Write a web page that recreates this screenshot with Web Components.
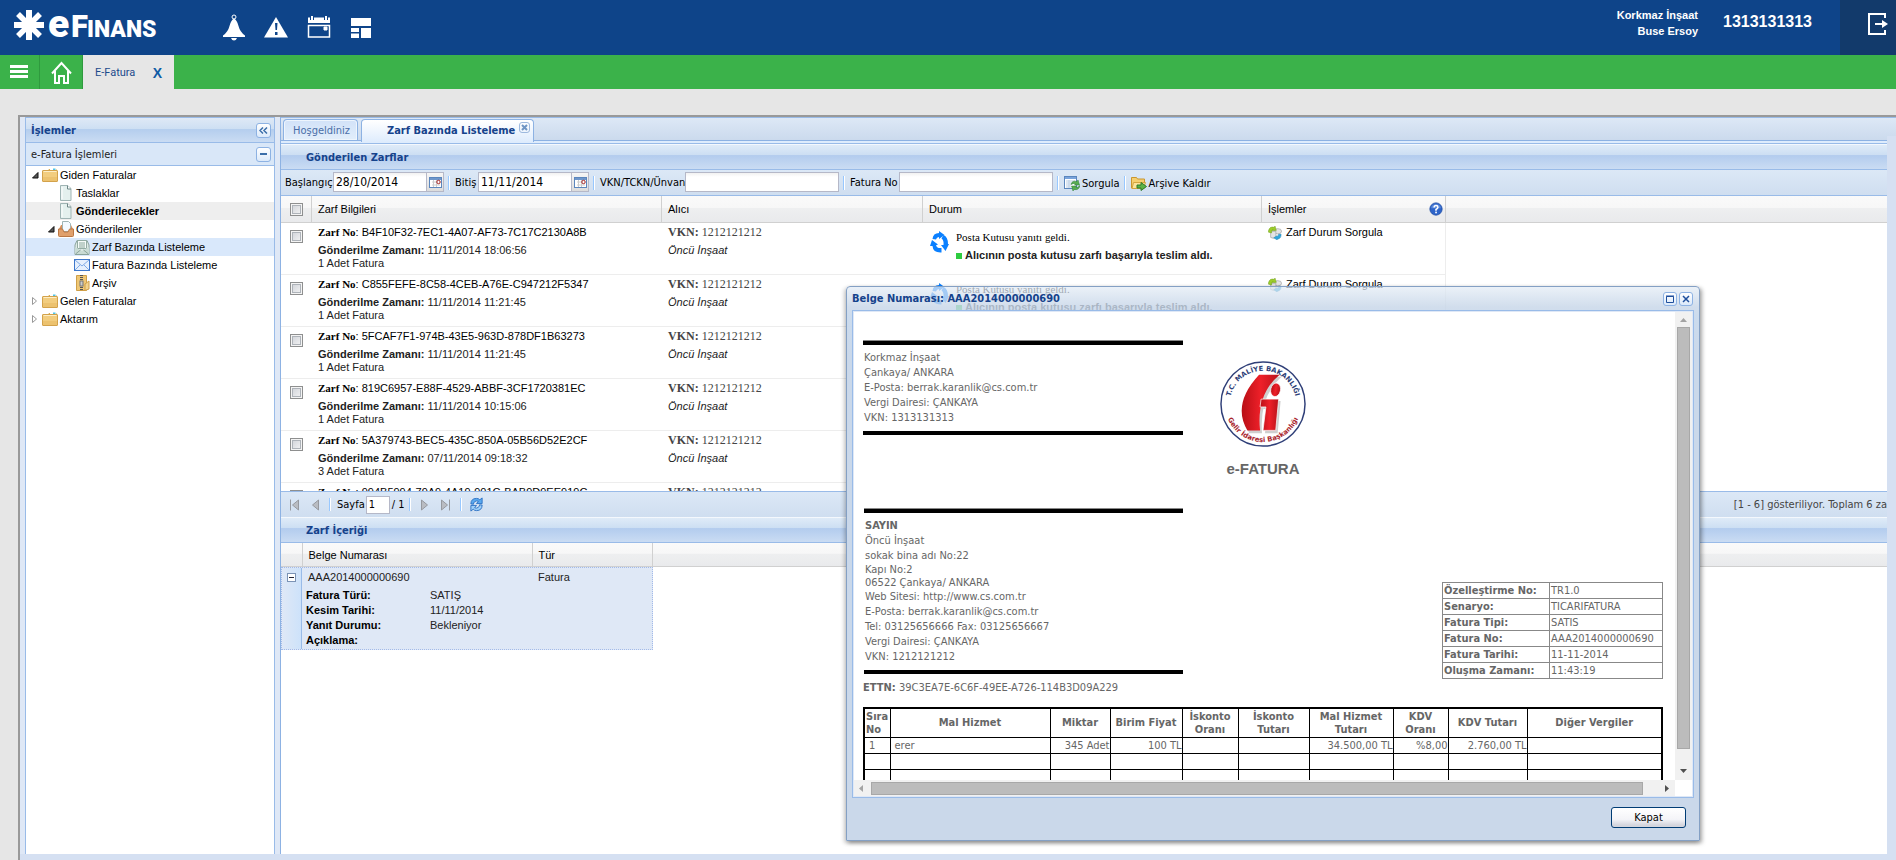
<!DOCTYPE html>
<html lang="tr">
<head>
<meta charset="utf-8">
<title>e-Finans</title>
<style>
html, body { margin: 0; height: 100%; }
body { background: #e6e6e6; overflow: hidden; font: 11px/13px "DejaVu Sans Condensed", "DejaVu Sans", Tahoma, sans-serif; color: #000; }
</style>
</head>
<body>
<efinans-app></efinans-app>
<script>
const base = `
*{box-sizing:border-box}
:host{--line:#99bbe8;--title:#15428b;--ui:"DejaVu Sans Condensed","DejaVu Sans",Tahoma,sans-serif;--txt:"Liberation Sans",Arial,sans-serif;--times:"Liberation Serif","Times New Roman",serif;display:block}
button{margin:0;padding:0;border:0;background:none;font:inherit;color:inherit}
a{color:inherit;text-decoration:none}
input{margin:0;outline:none;border-radius:0}
svg{display:block}
table{border-collapse:collapse;table-layout:fixed}
td,th{padding:0;text-align:left;font-weight:400}
input[type=checkbox]{appearance:none;display:block;width:13px;height:13px;border:1px solid #8e8f8f;background:linear-gradient(135deg,#cdd0d6,#f6f6f6);box-shadow:inset 0 0 0 1px #f4f4f4,inset 0 0 0 2px #aeb3b9}
`;
const define = (name, css, html) => {
  const t = document.createElement('template');
  t.innerHTML = `<style>${base}${css}</style>${typeof html === 'string' ? html : ''}`;
  customElements.define(name, class extends HTMLElement {
    constructor() {
      super();
      const root = this.attachShadow({ mode: 'open' });
      root.append(t.content.cloneNode(true));
    }
    connectedCallback() {
      if (typeof html === 'function' && !this.done) {
        this.done = true;
        this.shadowRoot.innerHTML = `<style>${base}${css}</style>` + html(this);
      }
    }
  });
};

/* ---------- icons ---------- */
const ICONS = {
  folder: `<path d="M1 3.5h5l1-1.500h7.500v3H1z" fill="#dcae55"/><rect x="8" y="1.500" width="6" height="3" fill="#fff"/><rect x="11" y="1.500" width="2.500" height="1.500" fill="#4fc3e8"/><rect x=".5" y="3.500" width="15" height="11" rx=".5" fill="#f2cd7f" stroke="#d3a24b"/><path d="M1.500 4.500h13" stroke="#fdeec6"/><path d="M1 10h14v4H1z" fill="#e6b85f" opacity=".5"/>`,
  page: `<path d="M2.500 .5h7l3.500 3v12h-10.500z" fill="#e4f0ee" stroke="#9fb4b4"/><path d="M9.500 .5v3.500h3.500" fill="#fff" stroke="#6d8787"/><path d="M4 2v12" stroke="#fff"/>`,
  inbox: `<path d="M1 8l2-4h10l2 4v6.500H1z" fill="#d68f5a"/><path d="M4.500 .5h6l2 2v8h-8z" fill="#f4faff" stroke="#9fb4b4"/><path d="M.5 8h4l1.500 3h4l1.500-3h4v6.500q0 1-1 1h-13q-1 0-1-1z" fill="#e0a06c" stroke="#bb7744"/>`,
  mailopen: `<path d="M1 6l2-4.500h10L15 6v9.500H1z" fill="#dfeae6" stroke="#8aa39b"/><path d="M3.500 1.500h9v8h-9z" fill="#f6fbf8" stroke="#93aca3"/><path d="M5 4h6M5 6h6M5 8h6" stroke="#8aa79c"/><path d="M1 8l7 4 7-4v7H1z" fill="#c9dbd4"/><path d="M1.500 15l5-4M14.500 15l-5-4" stroke="#8aa39b"/>`,
  mail: `<rect x=".5" y="2.500" width="15" height="11" fill="#e6f0fd" stroke="#3e78cc"/><path d="M1 3l7 6 7-6M1 13l5-5M15 13l-5-5" fill="none" stroke="#7faae6"/>`,
  zip: `<path d="M2.500 .5h10v15h-10z" fill="#efc775" stroke="#cf9f48"/><path d="M11 9l4-3v8l-4 1.500z" fill="#f3d48f" stroke="#cf9f48"/><path d="M7.500 0v16" stroke="#555" stroke-width="3" stroke-dasharray="1 1"/><rect x="6" y="6" width="3" height="5" fill="#ccc" stroke="#777"/>`,
  calendar: `<rect x=".5" y="1.500" width="12" height="10" fill="#fff" stroke="#5b86bd"/><path d="M1 3h11" stroke="#6f97cb" stroke-width="2"/><path d="M3 6h8M3 9h8M4.500 4v7M7.500 4v7" stroke="#ccc"/><circle cx="9.500" cy="6" r="1.700" fill="#fff" stroke="#a02020"/>`,
  sheet: `<rect x=".5" y="1.500" width="12" height="12" fill="#fff" stroke="#5b86bd"/><rect x="1" y="2" width="11" height="2" fill="#7aa4dc"/><path d="M2 6h9M2 8h9M2 10h5M2 12h5M5 5v8" stroke="#b9cde4"/><path d="M7 9.500Q8 5 13 6.500L14 5l1.500 5h-5l1.200-1.500Q9.500 8 7 9.500zM16 10.500q-1 5-6 4L9 16l-1.500-5h5l-1.200 1.500q2.500.5 4.700-2z" fill="#58ae50" stroke="#2d7a35" stroke-width=".5"/>`,
  archive: `<path d="M.5 2.500h5l1 1.500h7v9H.5z" fill="#f5cf70" stroke="#c9962f"/><path d="M2.500 7.500h12l-2 6H1z" fill="#fbe39d" stroke="#d3a53f"/><path d="M6 10h4V7.500l5.500 4-5.500 4V13H6z" fill="#5cb346" stroke="#2f7a2a"/>`,
  status: `<ellipse cx="11" cy="6" rx="4.500" ry="3" fill="#e4e4e4" stroke="#999" stroke-width=".7"/><path d="M3 6v7q3 2 6 0V6z" fill="#e4e4e4" stroke="#999" stroke-width=".7"/><path d="M.5 5.500Q2 0 7 1.500L8 0l1.500 5H4.500L5.500 4Q4 5 4 8L.5 7z" fill="#9ccc2a" stroke="#6a9a18" stroke-width=".5"/><path d="M15 9.500q0 5.500-4.500 5.500v1l-4-2.500 4-2.500v1q1.500 0 1.500-2.500z" fill="#2fa6dc" stroke="#1c7fb0" stroke-width=".5"/>`,
  refresh: `<path d="M2 7.500Q2 1.500 8 1.500q2.500 0 3.500 1.500L14 1v6H8l2-2.500Q8 3.500 6 5 5 6 4.500 8q-1-1-2.500-.5z" fill="#5aa9ee" stroke="#2e72c4"/><path d="M14 8.500q0 6-6 6-2.500 0-3.500-1.500L2 15V9h6l-2 2.500q2 1 4-.5 1-1 1.500-3 1 1 2.500.5z" fill="#9fd0f8" stroke="#2e72c4"/>`,
  cycle: `<path d="M2.500 8Q3 2 9 2V0l5.500 4L9 8V6Q6.500 6 6 8.500z"/><path d="M13.500 4Q18 6 18 13h1l-3.500 7-4.500-6h2.500q.5-5-2-6.500z"/><path d="M11.500 17v4.500Q3 22 2.500 15L0 15l2-6 6 4.500-2 .7Q7 17.500 11.500 17z"/>`,
  help: `<circle cx="8" cy="8" r="7" fill="#2d64c9" stroke="#1f4fa8"/><path d="M2.500 7a5.500 4.500 0 0 1 11 0z" fill="#79a3ea" opacity=".6"/><path d="M5.800 6.300Q6 4 8 4t2.200 2Q10.200 7.300 8 8.600V10" fill="none" stroke="#fff" stroke-width="1.800"/><rect x="7.100" y="11" width="1.900" height="1.900" fill="#fff"/>`
};
define('x-icon', `:host{flex:none;display:block}`, el => {
  const n = el.getAttribute('name'), w = el.getAttribute('w') || 16, h = el.getAttribute('h') || w;
  const vb = n === 'cycle' ? '0 0 19 22' : n === 'calendar' ? '0 0 13 13' : '0 0 16 16';
  return `<svg width="${w}" height="${h}" viewBox="${vb}" fill="#0b80ff" aria-hidden="true">${ICONS[n]}</svg>`;
});

/* ---------- top bar ---------- */
define('top-bar', `
:host{display:flex;height:55px;background:#0e4489;color:#fff;font-family:var(--txt)}
.logo{margin:0 0 0 12px;flex:none}
nav{display:flex;align-items:flex-start;gap:19px;margin:14px 0 0 61px;flex:1}
.who{font-weight:700;line-height:16px;text-align:right;margin:7px 0 0}
.id{font-weight:700;font-size:16px;line-height:18px;margin:13px 28px 0 25px}
.exit{width:56px;background:#123a6b;display:flex;align-items:flex-start;padding:13px 0 0 28px}
`, `
<svg class="logo" width="150" height="55" viewBox="12 0 150 55" fill="#fff" role="img" aria-label="eFinans">
 <g stroke="#fff" stroke-width="6"><path d="M29 10v30M14 25h30"/><path d="M18 14l22 22M40 14L18 36" stroke-width="5.500"/></g>
 <g font-family="Roboto,sans-serif" font-weight="900"><text x="48" y="37" font-size="39">e</text><text x="71" y="37" font-size="31">F</text><text x="87" y="37" font-size="23">INANS</text></g>
</svg>
<nav>
 <button aria-label="Bildirimler"><svg width="22" height="27" viewBox="0 0 22 27" fill="#fff"><circle cx="11" cy="3" r="2" fill="none" stroke="#fff"/><path d="M11 4.500Q14 6 15.500 12T22 21.500V23H0v-1.500Q5 18 6.500 12T11 4.500z"/><path d="M8 24h6q-1 2.500-3 2.500T8 24z"/></svg></button>
 <button aria-label="Uyarılar"><svg width="24" height="27" viewBox="0 0 24 27"><path d="M12 3L24 23.500H0z" fill="#fff"/><path d="M11 9h2.500l-.5 7h-1.500zM11 18h2.500v3H11z" fill="#0e4489"/></svg></button>
 <button aria-label="Takvim"><svg width="24" height="27" viewBox="0 0 24 27" fill="none" stroke="#fff"><path d="M1.500 11.500h21V23h-21z" stroke-width="1.500"/><path d="M1 3.500h22v5.500H1z" fill="#fff" stroke="none"/><path d="M5 2v4M19 2v4" stroke="#0e4489" stroke-width="4"/><path d="M5 2v4.500M19 2v4.500" stroke-width="2"/><path d="M17 13h3v3h-3z" fill="#fff"/></svg></button>
 <button aria-label="Düzen"><svg width="24" height="27" viewBox="0 0 24 27" fill="#fff"><path d="M1 4h20v8H1zM1 14h8v4H1zM1 19.500h8V24H1zM11 14h10v10H11z"/></svg></button>
</nav>
<div class="who">Korkmaz İnşaat<br>Buse Ersoy</div>
<div class="id">1313131313</div>
<button class="exit" aria-label="Çıkış"><svg width="20" height="22" viewBox="0 0 20 22" fill="none" stroke="#fff" stroke-width="2"><path d="M17 5V1H1v20h16v-4M7 11h10"/><path d="M14 7l6 4-6 4z" fill="#fff" stroke="none"/></svg></button>
`);

define('green-nav', `
:host{display:flex;height:34px;background:#3bb24a}
.menu,.home{border-right:1px solid #2f9a3e;display:flex;align-items:center}
.menu{width:40px;padding-left:10px}.home{width:43px;padding-left:11px}
.tab{width:91px;background:#e6e6e6;color:#1c4a8c;display:flex;align-items:flex-start;padding:10px 12px 0;justify-content:space-between;font-family:Roboto,sans-serif;line-height:15px}
.tab button{font:700 14px/17px var(--txt);color:#0e5ba5}
`, `
<button class="menu" aria-label="Menü"><svg width="18" height="14" viewBox="0 0 18 14" fill="#fff"><path d="M0 0h18v3H0zM0 5h18v3H0zM0 10h18v3H0z"/></svg></button>
<button class="home" aria-label="Ana sayfa"><svg width="21" height="23" viewBox="0 0 21 23" fill="none" stroke="#fff" stroke-width="2"><path d="M1 12.500L10.500 2 20 12.500M4 10v12h4v-7h5v7h4V10"/></svg></button>
<div class="tab"><a href="#efatura">E-Fatura</a><button aria-label="Kapat">X</button></div>
`);

/* ---------- sidebar ---------- */
define('tree-node', `
:host{display:flex;align-items:center;height:18px;font:11px/18px var(--txt);padding-left:calc(4px + var(--depth,0)*16px)}
:host([hot]){background:#eee}:host([selected]){background:#d9e8fb}:host([hot]) a{font-weight:700}
.arrow{width:12px;flex:none;display:flex;padding-left:1px}
a{margin-left:2px}
`, el => {
  const s = el.getAttribute('state');
  el.style.setProperty('--depth', el.getAttribute('depth') || 0);
  const arrow = s === 'open' ? `<svg width="8" height="8" viewBox="0 0 8 8"><path d="M7 1.500v5.500H1.500z" fill="#555" stroke="#111"/></svg>`
    : s === 'closed' ? `<svg width="8" height="8" viewBox="0 0 8 8"><path d="M1.500 .5l4 3.500-4 3.500z" fill="#fff" stroke="#999"/></svg>` : '';
  return `<span class="arrow">${arrow}</span><x-icon name="${el.getAttribute('icon')}"></x-icon><a href="#"><slot></slot></a>`;
});

define('side-bar', `
:host{width:250px;flex:none;display:flex;flex-direction:column;border:1px solid var(--line);border-bottom:0;background:#fff}
header,h3{display:flex;justify-content:space-between;align-items:center;margin:0;padding:0 3px 0 5px;border-bottom:1px solid var(--line)}
header{height:25px;background:linear-gradient(#dfe9f6,#cddff3 46%,#b5ceee 48%,#cadcf3);color:var(--title);font-weight:700}
h3{height:23px;background:#d9e7f8;font:11px/13px var(--ui);color:#222}
header button,h3 button{width:15px;height:15px;border:1px solid #8db2e3;border-radius:3px;background:linear-gradient(#fff,#dbe9fa);display:grid;place-items:center}
`, `
<header><span>İşlemler</span><button aria-label="Daralt"><svg width="9" height="7" viewBox="0 0 9 7" fill="none" stroke="#3b6ea9" stroke-width="1.500"><path d="M4 .5l-3 3 3 3M8 .5l-3 3 3 3"/></svg></button></header>
<h3><span>e-Fatura İşlemleri</span><button aria-label="Kapat"><svg width="7" height="2"><path d="M0 1h7" stroke="#3b6ea9" stroke-width="2"/></svg></button></h3>
<div>
<tree-node state="open" icon="folder">Giden Faturalar</tree-node>
<tree-node depth="1" icon="page">Taslaklar</tree-node>
<tree-node depth="1" icon="page" hot>Gönderilecekler</tree-node>
<tree-node depth="1" state="open" icon="inbox">Gönderilenler</tree-node>
<tree-node depth="2" icon="mailopen" selected>Zarf Bazında Listeleme</tree-node>
<tree-node depth="2" icon="mail">Fatura Bazında Listeleme</tree-node>
<tree-node depth="2" icon="zip">Arşiv</tree-node>
<tree-node state="closed" icon="folder">Gelen Faturalar</tree-node>
<tree-node state="closed" icon="folder">Aktarım</tree-node>
</div>`);

/* ---------- main area ---------- */
define('tab-strip', `
:host{height:27px;border-top:1px solid var(--line);border-bottom:1px solid var(--line);background:#deecfd;margin-right:-9px;flex:none}
nav{display:flex;height:23px;border-bottom:1px solid #8db2e3;background:linear-gradient(#dde8f6,#cbdaed);padding:1px 0 0 2px;gap:3px}
.tab{border:1px solid #8db2e3;border-bottom:0;border-radius:4px 4px 0 0;height:21px;font-size:11px;line-height:21px}
.one{width:75px;padding-left:9px;color:#4a6ea8;background:linear-gradient(#d2e2f8,#e2eefb);box-shadow:inset 0 0 0 1px #eef5fd}
.two{width:173px;height:23px;background:linear-gradient(#fff,#deecfd);color:var(--title);font-weight:700;display:flex;padding:0 3px 0 25px;justify-content:space-between}
.two button{width:11px;height:11px;margin-top:2px;border:1px solid #9db9de;border-radius:3px;display:grid;place-items:center}
`, `<nav><a class="tab one" href="#">Hoşgeldiniz</a><div class="tab two"><a href="#">Zarf Bazında Listeleme</a><button aria-label="Sekmeyi kapat"><svg width="7" height="7" viewBox="0 0 7 7" stroke="#6f95c4" stroke-width="2"><path d="M1 1l5 5M6 1L1 6"/></svg></button></div></nav>`);

define('panel-title', `
:host{height:26px;flex:none;border-bottom:1px solid var(--line);border-top:1px solid #f4f8fd;background:linear-gradient(#dfebf8,#cddff3 40%,#b3ccee 44%,#cadcf3);color:var(--title);font:700 11px/25px var(--ui);padding-left:25px}
`, `<slot></slot>`);

define('date-field', `
:host{display:flex}
input{width:94px;height:20px;border:1px solid #b5b8c8;background:linear-gradient(#f1f1f1,#fff 4px);font:12px/16px var(--ui);padding:0 2px}
button{width:17px;height:20px;border:1px solid #b5b8c8;border-left:0;background:linear-gradient(#f6f6f6,#dcdcdc);display:grid;place-items:center}
label{line-height:22px;width:var(--label)}
`, el => {
  el.style.setProperty('--label', el.getAttribute('label-width'));
  return `<label for="d">${el.getAttribute('label')}</label><input id="d" value="${el.getAttribute('value')}"><button aria-label="Takvim"><x-icon name="calendar" w="13"></x-icon></button>`;
});

define('filter-bar', `
:host{display:flex;height:26px;flex:none;padding:2px 0 0 4px;background:linear-gradient(#dce8f6,#cfdef0);border-bottom:1px solid var(--line);white-space:nowrap}
i{width:2px;height:14px;margin:4px 5px 0 4px;background:linear-gradient(90deg,#98c8ff 50%,#fff 50%);flex:none}
label{line-height:22px}
label[for=v]{width:85px}label[for=f]{width:49px}
input{width:154px;height:20px;border:1px solid #b5b8c8;background:linear-gradient(#f1f1f1,#fff 4px)}
button{display:flex;align-items:center;gap:2px;height:22px}
`, `
<date-field label="Başlangıç" label-width="48px" value="28/10/2014"></date-field><i></i>
<date-field label="Bitiş" label-width="23px" value="11/11/2014"></date-field><i></i>
<label for="v">VKN/TCKN/Ünvan</label><input id="v"><i></i>
<label for="f">Fatura No</label><input id="f"><i></i>
<button><x-icon name="sheet"></x-icon>Sorgula</button><i></i>
<button><x-icon name="archive"></x-icon>Arşive Kaldır</button>`);

const ENVELOPES = [
  ['B4F10F32-7EC1-4A07-AF73-7C17C2130A8B', '11/11/2014 18:06:56', 1],
  ['C855FEFE-8C58-4CEB-A76E-C947212F5347', '11/11/2014 11:21:45', 1],
  ['5FCAF7F1-974B-43E5-963D-878DF1B63273', '11/11/2014 11:21:45', 1],
  ['819C6957-E88F-4529-ABBF-3CF1720381EC', '11/11/2014 10:15:06', 1],
  ['5A379743-BEC5-435C-850A-05B56D52E2CF', '07/11/2014 09:18:32', 3],
  ['994B5994-79A9-4A19-901C-BAB9D9EE919C', '07/11/2014 09:10:14', 1]
];
define('envelope-grid', `
:host{height:295px;flex:none;background:#fff;overflow:hidden;font:11px/13px var(--txt)}
.head{background:linear-gradient(#fafafa,#f7f7f7 45%,#eeeff0 48%,#e9eaec);border-bottom:1px solid #d0d0d0;height:27px}
table{width:1165px;border-collapse:separate;border-spacing:0}
th{height:26px;padding-left:6px;border-right:1px solid #d0d0d0;vertical-align:middle}
th:first-child,td:first-child{padding-left:9px}
td{height:52px;vertical-align:top;padding:3px 0 4px 6px;border-bottom:1px solid #ededed}
td:first-child{padding-top:7px}
td:last-child{border-right:1px solid #ededed}
b.t,.v,.p{font-family:var(--times)}
.v{font-size:12px}
p{margin:0}p+p{margin-top:5px;color:#222}p+p+p{margin-top:0}
.v{color:#444}
.d{display:flex;padding:5px 0 0 1px;gap:7px}
.d p+p::before{content:"";display:inline-block;width:6px;height:6px;background:#2ecc40;margin-right:3px}
.d p+p{font-weight:700}
.q{display:flex;gap:4px}
.last{display:flex;justify-content:space-between;padding-right:2px;align-items:center}
`, () => {
  const cols = `<colgroup><col style="width:31px"><col style="width:350px"><col style="width:261px"><col style="width:339px"><col style="width:184px"></colgroup>`;
  return `<div class="head"><table>${cols}<tr><th><input type="checkbox" aria-label="Tümünü seç"></th><th>Zarf Bilgileri</th><th>Alıcı</th><th>Durum</th><th><div class="last">İşlemler<x-icon name="help" w="14"></x-icon></div></th></tr></table></div>
<table>${cols}${ENVELOPES.map(([no, at, n]) => `<tr><td><input type="checkbox" aria-label="${no}"></td>
<td><p><b class="t">Zarf No</b>: ${no}</p><p><b>Gönderilme Zamanı:</b> ${at}</p><p>${n} Adet Fatura</p></td>
<td><p class="v"><b>VKN:</b> 1212121212</p><p><em>Öncü İnşaat</em></p></td>
<td><div class="d"><x-icon name="cycle" w="19" h="22"></x-icon><div><p class="p">Posta Kutusu yanıtı geldi.</p><p>Alıcının posta kutusu zarfı başarıyla teslim aldı.</p></div></div></td>
<td><a class="q" href="#"><x-icon name="status" w="14"></x-icon>Zarf Durum Sorgula</a></td></tr>`).join('')}</table>`;
});

define('paging-bar', `
:host{display:flex;align-items:center;height:26px;flex:none;border-top:1px solid var(--line);background:linear-gradient(#dce8f6,#cfdef0);padding-left:8px;white-space:nowrap;overflow:hidden}
i{width:2px;height:13px;background:linear-gradient(90deg,#98c8ff 50%,#fff 50%);flex:none}
button{flex:none}
label{margin:0 1px 0 6px}
input{width:24px;height:18px;border:1px solid #b5b8c8;font:11px/14px var(--ui);padding:0 2px;margin-right:2px}
span{margin-right:4px}
.prev{margin:0 10px 0 12px}.next{margin:0 12px 0 10px}
.end{margin:0 7px 0 9px}
.sum{margin:0 0 0 auto;color:#444}
`, `
<button aria-label="İlk"><svg width="11" height="12" fill="#b9bcc2" stroke="#96999f"><path d="M1.500 .5v11M9.500 1v10l-6-5z"/></svg></button>
<button class="prev" aria-label="Önceki"><svg width="7" height="12" fill="#b9bcc2" stroke="#96999f"><path d="M6.500 1v10l-6-5z"/></svg></button>
<i></i><label for="p">Sayfa</label><input id="p" value="1"><span>/ 1</span><i></i>
<button class="next" aria-label="Sonraki"><svg width="7" height="12" fill="#b9bcc2" stroke="#96999f"><path d="M.5 1v10l6-5z"/></svg></button>
<button aria-label="Son"><svg width="11" height="12" fill="#b9bcc2" stroke="#96999f"><path d="M9.500 .5v11M1.500 1v10l6-5z"/></svg></button>
<i class="end"></i><button aria-label="Yenile"><x-icon name="refresh" w="15"></x-icon></button>
<span class="sum">[1 - 6] gösteriliyor. Toplam 6 za</span>`);

define('content-grid', `
:host{flex:1;background:#fff;font:11px/13px var(--txt);overflow:hidden}
.head{background:linear-gradient(#fafafa,#f7f7f7 45%,#eeeff0 48%,#e9eaec);border-bottom:1px solid #d0d0d0;height:24px}
table.h{width:371px}
.h th{height:23px;padding:1px 0 0 6px;border-right:1px solid #d0d0d0}
.row{width:372px;height:83px;display:flex;background:#dfe8f6;border:1px dotted #a3bae9}
.exp{width:20px;border-right:1px solid #99bbe8;background:linear-gradient(90deg,#dfe8f6,#cde2fa);padding:5px 0 0 5px}
.exp button{width:9px;height:9px;border:1px solid #7b93b5;background:#fff;display:grid;place-items:center}
.b{flex:1;padding:3px 0 0 4px;color:#222}
.top{display:flex;padding-left:2px;margin-bottom:4px}.top span:first-child{width:230px}
.b td,.b th{height:15px;line-height:15px}.b th{font-weight:700;width:124px;color:#000}
`, `
<div class="head"><table class="h"><colgroup><col style="width:21px"><col style="width:230px"><col style="width:120px"></colgroup><tr><th></th><th>Belge Numarası</th><th>Tür</th></tr></table></div>
<div class="row"><div class="exp"><button aria-label="Daralt"><svg width="5" height="1"><path d="M0 .5h5" stroke="#223"/></svg></button></div>
<div class="b"><div class="top"><span>AAA2014000000690</span><span>Fatura</span></div>
<table><tr><th>Fatura Türü:</th><td>SATIŞ</td></tr><tr><th>Kesim Tarihi:</th><td>11/11/2014</td></tr><tr><th>Yanıt Durumu:</th><td>Bekleniyor</td></tr><tr><th>Açıklama:</th><td></td></tr></table></div></div>`);

define('main-area', `
:host{flex:1;min-width:0;margin:0 9px 0 5px;border-left:1px solid #8db2e3;display:flex;flex-direction:column}
`, `<tab-strip></tab-strip><panel-title>Gönderilen Zarflar</panel-title><filter-bar></filter-bar><envelope-grid></envelope-grid><paging-bar></paging-bar><panel-title>Zarf İçeriği</panel-title><content-grid></content-grid>`);

/* ---------- invoice ---------- */
define('gib-seal', `:host{width:88px;height:86px}`, `
<svg width="88" height="86" viewBox="0 0 88 88" role="img" aria-label="Gelir İdaresi Başkanlığı">
<defs><path id="u" d="M10 44a34 34 0 0 1 68 0"/><path id="l" d="M5 44a39 39 0 0 0 78 0"/>
<linearGradient id="r" x2="1"><stop stop-color="#b80f16"/><stop offset=".5" stop-color="#ee2029"/><stop offset="1" stop-color="#b9121a"/></linearGradient></defs>
<circle cx="44" cy="44" r="43" fill="#fff" stroke="#2f3f78" stroke-width="1.500"/>
<g fill="#777" opacity=".35" transform="translate(2 2)"><path d="M40 14h21Q38 34 41 72H28Q14 44 40 14z"/><path d="M46 39h14l-3 33H44l3-25h-5z"/></g>
<path d="M40 14h21Q37 34 41 71H28Q12 44 40 14z" fill="url(#r)"/><path d="M42 39h18l-3 32H44l3-24h-6z" fill="url(#r)" stroke="#fff" stroke-width=".7"/><ellipse cx="57" cy="29.500" rx="5" ry="7" fill="url(#r)" transform="rotate(12 57 29)" stroke="#fff" stroke-width=".7"/>
<g font-family="DejaVu Sans,sans-serif" font-weight="700" font-size="7" text-anchor="middle"><text fill="#2f3f78"><textPath href="#u" startOffset="50%">T.C. MALİYE BAKANLIĞI</textPath></text><text fill="#a8232b"><textPath href="#l" startOffset="50%">Gelir İdaresi Başkanlığı</textPath></text></g>
</svg>`);

define('invoice-sheet', `
:host{width:800px;color:#666;font:11px/15px var(--ui)}
.top{display:flex;height:168px}
.party{width:320px;border-top:4px solid #000;border-bottom:4px solid #000;padding:5px 1px;box-shadow:0 -1px 0 #888}
.top .party{height:94px}
.seal{flex:1;display:flex;flex-direction:column;align-items:center;padding-top:20px;margin-right:320px}
.seal strong{font:700 15px/18px var(--txt);margin-top:13px;white-space:nowrap}
.mid{display:flex;justify-content:space-between;align-items:flex-end}
.mid .party{height:165px;width:319px;margin-left:1px}
.t{line-height:13px}
.info{width:221px;border:1px solid #222;margin-bottom:-5px;font-size:11px}
.info th{font-weight:700;width:107px}
.info td,.info th{border:1px solid #888;height:16px;line-height:15px;padding-left:1px;white-space:nowrap}
.ettn{margin:6px 0 0}
.items{width:798px;margin-top:12px;border:2px solid #000;line-height:13px}
.items td,.items th{border:1px solid #000;white-space:nowrap}
.items th{height:29px;font-weight:700;text-align:center;white-space:normal}
.items th:first-child{text-align:left;padding-left:1px}
.items td{height:16px;text-align:right}
.items td:first-child,.items td:nth-child(2){text-align:left;padding-left:4px}
`, () => {
  const w = [26, 160, 60, 72, 56, 71, 84, 55, 79, 135];
  const h = ['Sıra No', 'Mal Hizmet', 'Miktar', 'Birim Fiyat', 'İskonto Oranı', 'İskonto Tutarı', 'Mal Hizmet Tutarı', 'KDV Oranı', 'KDV Tutarı', 'Diğer Vergiler'];
  const r = ['1', 'erer', '345 Adet', '100 TL', '', '', '34.500,00 TL', '%8,00', '2.760,00 TL', ''];
  const info = [['Özelleştirme No:', 'TR1.0'], ['Senaryo:', 'TICARIFATURA'], ['Fatura Tipi:', 'SATIS'], ['Fatura No:', 'AAA2014000000690'], ['Fatura Tarihi:', '11-11-2014'], ['Oluşma Zamanı:', '11:43:19']];
  const empty = `<tr>${w.map(() => '<td></td>').join('')}</tr>`;
  return `<div class="top"><div class="party">Korkmaz İnşaat<br>Çankaya/ ANKARA<br>E-Posta: berrak.karanlik@cs.com.tr<br>Vergi Dairesi: ÇANKAYA<br>VKN: 1313131313</div>
<div class="seal"><gib-seal></gib-seal><strong>e-FATURA</strong></div></div>
<div class="mid"><div class="party"><b>SAYIN</b><br>Öncü İnşaat<br>sokak bina adı No:22<div class="t">Kapı No:2<br>06522 Çankaya/ ANKARA</div>Web Sitesi: http://www.cs.com.tr<br>E-Posta: berrak.karanlik@cs.com.tr<br>Tel: 03125656666 Fax: 03125656667<br>Vergi Dairesi: ÇANKAYA<br>VKN: 1212121212</div>
<table class="info">${info.map(([a, b]) => `<tr><th>${a}</th><td>${b}</td></tr>`).join('')}</table></div>
<p class="ettn"><b>ETTN:</b> 39C3EA7E-6C6F-49EE-A726-114B3D09A229</p>
<table class="items"><colgroup>${w.map(x => `<col style="width:${x}px">`).join('')}</colgroup><tr>${h.map(x => `<th>${x}</th>`).join('')}</tr><tr>${r.map(x => `<td>${x}</td>`).join('')}</tr>${empty.repeat(3)}</table>`;
});

define('document-window', `
:host{position:absolute;top:286px;right:196px;width:854px;height:555px;display:flex;flex-direction:column;padding:0 5px;border:1px solid #84a0c4;border-radius:4px 4px 0 0;background:linear-gradient(rgba(226,235,245,.7),rgba(199,214,232,.82) 20px,rgba(199,216,236,.92) 30px,#cad8ea 70px);box-shadow:2px 2px 4px rgba(0,0,0,.35),-2px 2px 4px rgba(0,0,0,.2)}
header{height:23px;display:flex;align-items:center;gap:2px;color:var(--title);font-weight:700;padding-right:1px}
header span{flex:1}
header button{width:14px;height:14px;border:1px solid #8db2e3;border-radius:3px;background:linear-gradient(#fff,#dbe9fa);display:grid;place-items:center}
.body{flex:1;min-height:0;display:grid;grid-template:minmax(0,1fr) 16px/minmax(0,1fr) 17px;border:1px solid var(--line);box-shadow:inset 0 0 0 1px #dfe8f6;padding:1px;background:#fff}
.view{overflow:hidden;padding:29px 0 0 9px}
.v,.h{background:#f1f1f1;display:flex;align-items:center;justify-content:space-between}
.v{flex-direction:column;padding:6px 0 7px}.h{padding:0 6px 0 5px}
.v b{width:13px;flex:1;margin:5px 0 20px;background:#bcbcbc;border:1px solid #a8a8a8}
.h b{height:13px;flex:1;margin:0 22px 0 8px;background:#bcbcbc;border:1px solid #a8a8a8}
footer{height:42px;flex:none;display:flex;justify-content:flex-end;padding:9px 8px 0 0}
footer button{width:75px;height:21px;border:1px solid #003c74;border-radius:3px;background:linear-gradient(#fff,#f4f4f8 60%,#d4d5dd 90%);text-align:center}
`, `
<header><span>Belge Numarası: AAA2014000000690</span><button aria-label="Büyüt"><svg width="8" height="8" fill="none" stroke="#1f4f9c"><path d="M.5 1.500h7v6h-7zM0 1h8"/></svg></button><button aria-label="Kapat"><svg width="8" height="8" stroke="#1f4f9c" stroke-width="1.500"><path d="M1 1l6 6M7 1L1 7"/></svg></button></header>
<div class="body"><div class="view"><invoice-sheet></invoice-sheet></div>
<div class="v"><svg width="7" height="4"><path d="M0 4l3.500-4L7 4z" fill="#a3a3a3"/></svg><b></b><svg width="7" height="4"><path d="M0 0l3.500 4L7 0z" fill="#505050"/></svg></div>
<div class="h"><svg width="4" height="7"><path d="M4 0L0 3.500 4 7z" fill="#a3a3a3"/></svg><b></b><svg width="4" height="7"><path d="M0 0l4 3.500L0 7z" fill="#505050"/></svg></div></div>
<footer><button>Kapat</button></footer>`);

define('efinans-app', `
:host{display:flex;flex-direction:column;height:100vh}
main{flex:1;min-height:0;margin:26px 0 0 18px;border:2px solid #999;border-right:0;border-bottom:0;background:#dfe8f6;display:flex;padding:0 0 6px 5px;position:relative;overflow:hidden}
.edge{position:absolute;right:0;top:19px;bottom:0;width:9px;background:#d5e0f2}
.foot{position:absolute;left:0;right:0;bottom:0;height:6px;background:#d5e0f2}
`, `<top-bar></top-bar><green-nav></green-nav><main><side-bar></side-bar><main-area></main-area><div class="edge"></div><div class="foot"></div></main><document-window></document-window>`);
</script>
</body>
</html>
